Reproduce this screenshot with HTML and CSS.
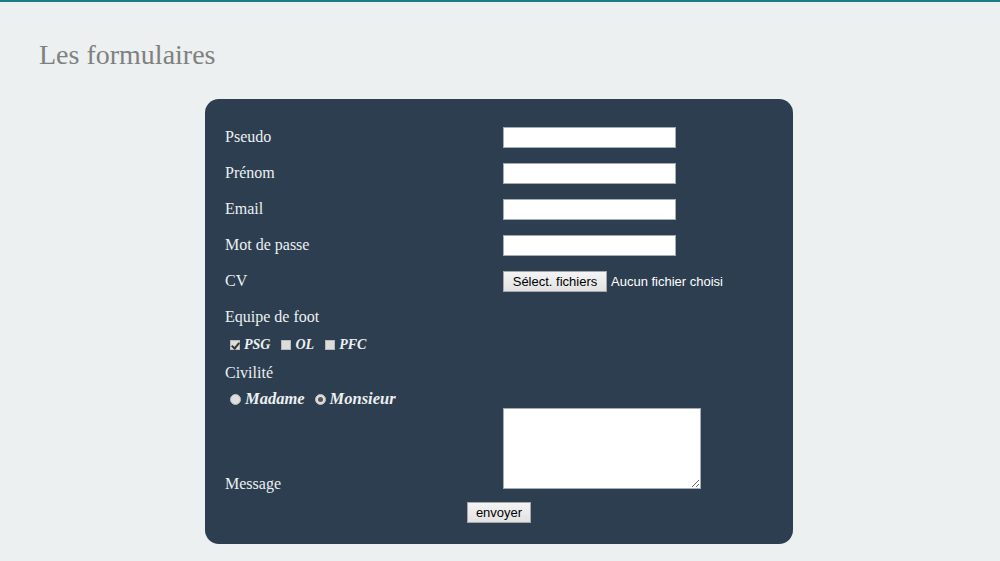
FILE: index.html
```html
<!DOCTYPE html>
<html lang="fr">
<head>
<meta charset="utf-8">
<title>Les formulaires</title>
<link rel="stylesheet" href="styles.css">
</head>
<body>
<h1 class="title">Les formulaires</h1>
<form class="panel">
  <div class="grid">
    <label class="lbl row-input">Pseudo</label>
    <div class="field row-input"><input class="text" type="text"></div>

    <label class="lbl row-input">Prénom</label>
    <div class="field row-input"><input class="text" type="text"></div>

    <label class="lbl row-input">Email</label>
    <div class="field row-input"><input class="text" type="text"></div>

    <label class="lbl row-input">Mot de passe</label>
    <div class="field row-input"><input class="text" type="password"></div>

    <label class="lbl row-input">CV</label>
    <div class="field row-input">
      <span class="btn file-btn">Sélect. fichiers</span>
      <span class="file-txt">Aucun fichier choisi</span>
    </div>

    <div class="lbl full row-equipe">Equipe de foot</div>
    <div class="full row-checks choices">
      <label class="choice"><span class="cb checked"></span><span class="script">PSG</span></label>
      <label class="choice"><span class="cb"></span><span class="script">OL</span></label>
      <label class="choice"><span class="cb"></span><span class="script">PFC</span></label>
    </div>

    <div class="lbl full row-civ">Civilité</div>
    <div class="full row-radios choices wide">
      <label class="choice"><span class="rd"></span><span class="script">Madame</span></label>
      <label class="choice"><span class="rd checked"></span><span class="script">Monsieur</span></label>
    </div>

    <label class="lbl msg-label">Message</label>
    <div class="field row-msg"><textarea class="area"></textarea></div>
  </div>
  <div class="actions"><button type="button" class="btn send">envoyer</button></div>
</form>
</body>
</html>
```

FILE: styles.css
```css
html, body {
  margin: 0;
  padding: 0;
}
body {
  background: #ecf0f1;
  border-top: 2px solid #1b7d86;
  font-family: "Liberation Serif", "Times New Roman", serif;
  min-height: 559px;
}
.title {
  margin: 37px 0 0 39px;
  font-size: 28px;
  line-height: 32px;
  font-weight: normal;
  color: #808080;
}
.panel {
  width: 548px;
  margin: 28px 0 0 205px;
  padding: 20px 20px 21px 20px;
  background: #2c3e50;
  border-radius: 14px;
}
.grid {
  display: grid;
  grid-template-columns: 278px 1fr;
}
.lbl {
  color: #ecf0f1;
  font-size: 16px;
  line-height: 18px;
  display: flex;
  align-items: center;
}
.full {
  grid-column: 1 / -1;
}
.field {
  display: flex;
  align-items: center;
}
.row-input { height: 36px; }
.row-equipe { height: 36px; }
.row-checks { height: 20px; }
.row-civ { height: 35px; }
.row-radios { height: 18px; }
.row-msg { height: 81px; align-items: flex-start; }
.text {
  box-sizing: border-box;
  width: 173px;
  height: 21px;
  margin: 0;
  border: 1px solid #a4adb6;
  background: #fff;
  padding: 1px 3px;
}
.btn {
  box-sizing: border-box;
  display: inline-flex;
  align-items: center;
  justify-content: center;
  font-family: "Liberation Sans", Arial, sans-serif;
  font-size: 13px;
  color: #000;
  background: linear-gradient(#f4f4f4, #e2e2e2);
  border: 1px solid #a7a7a7;
  border-radius: 0;
  margin: 0;
  padding: 0;
}
.file-btn {
  width: 104px;
  height: 21px;
}
.file-txt {
  margin-left: 4px;
  color: #fff;
  font-family: "Liberation Sans", Arial, sans-serif;
  font-size: 13px;
}
.choices {
  display: flex;
  align-items: center;
  padding-left: 5px;
  gap: 11px;
}
.choices.wide { gap: 10px; }
.choice {
  display: inline-flex;
  align-items: center;
  gap: 4px;
}
.script {
  color: #ecf0f1;
  font-family: "Liberation Serif", "Times New Roman", serif;
  font-style: italic;
  font-weight: bold;
  font-size: 14px;
}
.row-radios .script { font-size: 16.5px; }
.cb {
  box-sizing: border-box;
  width: 10px;
  height: 10px;
  background: #dcdcdc;
  border: 1px solid #b9b9b9;
  position: relative;
}
.cb.checked::after {
  content: "";
  position: absolute;
  left: 2px;
  top: 0px;
  width: 3px;
  height: 6px;
  border: solid #333;
  border-width: 0 2px 2px 0;
  transform: rotate(40deg);
}
.rd {
  box-sizing: border-box;
  width: 11px;
  height: 11px;
  border-radius: 50%;
  background: #dedede;
  border: 1px solid #bdbdbd;
  position: relative;
}
.rd.checked::after {
  content: "";
  position: absolute;
  left: 2px;
  top: 2px;
  width: 5px;
  height: 5px;
  border-radius: 50%;
  background: #555;
}
.msg-label {
  align-self: end;
  line-height: 16px;
  margin-bottom: -3px;
}
.area {
  box-sizing: border-box;
  width: 198px;
  height: 81px;
  margin: 0;
  border: 1px solid #a4adb6;
  background: #fff;
  resize: both;
}
.actions {
  display: flex;
  justify-content: center;
  margin-top: 13px;
}
.send {
  width: 64px;
  height: 21px;
}
```
